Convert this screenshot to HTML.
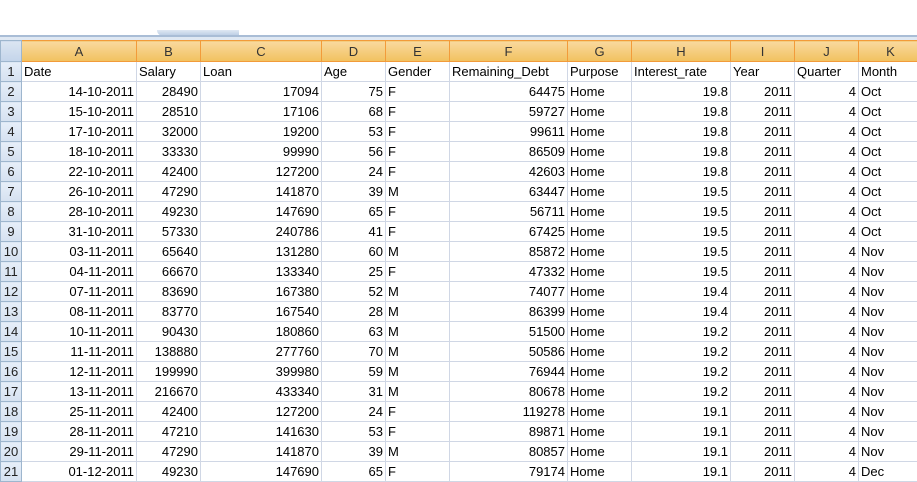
<!DOCTYPE html>
<html><head><style>
body{margin:0;width:917px;height:476px;overflow:hidden;background:#fff;font-family:"Liberation Sans",sans-serif;font-size:13px;color:#000;position:relative}
.bar{position:absolute;left:0;top:35px;width:917px;height:2px;background:#a9bdd6}
.bar2{position:absolute;left:0;top:37px;width:917px;height:3px;background:#dfe8f3}
.tab{position:absolute;left:157px;top:30px;width:82px;height:6px;background:linear-gradient(#dfe8f3,#b8cbe3);border-radius:0 0 0 8px}
table{position:absolute;left:0;top:40px;border-collapse:collapse;table-layout:fixed;width:922px}
td{height:19px;padding:0 2px;border:1px solid #d0d7e5;white-space:nowrap;overflow:hidden;line-height:19px}
tr.h td{background:linear-gradient(#f9d99f,#f1c15f);border-color:#f29b3a;text-align:center;color:#333;height:20px}
td.rh{background:linear-gradient(#e6eef9,#d5e1f0);border-color:#9eb6ce;text-align:center;color:#222;padding:0}
tr.h td.rh{background:linear-gradient(#dbe5f2,#c3d4ea);border-color:#9eb6ce}
.r{text-align:right}
</style></head><body>
<div class="tab"></div><div class="bar"></div><div class="bar2"></div>
<table>
<colgroup><col style="width:21px"><col style="width:115px"><col style="width:64px"><col style="width:121px"><col style="width:64px"><col style="width:64px"><col style="width:118px"><col style="width:64px"><col style="width:99px"><col style="width:64px"><col style="width:64px"><col style="width:64px"></colgroup>
<tr class="h"><td class="rh"></td><td>A</td><td>B</td><td>C</td><td>D</td><td>E</td><td>F</td><td>G</td><td>H</td><td>I</td><td>J</td><td>K</td></tr>
<tr><td class="rh">1</td><td>Date</td><td>Salary</td><td>Loan</td><td>Age</td><td>Gender</td><td>Remaining_Debt</td><td>Purpose</td><td>Interest_rate</td><td>Year</td><td>Quarter</td><td>Month</td></tr>
<tr><td class="rh">2</td><td class="r">14-10-2011</td><td class="r">28490</td><td class="r">17094</td><td class="r">75</td><td>F</td><td class="r">64475</td><td>Home</td><td class="r">19.8</td><td class="r">2011</td><td class="r">4</td><td>Oct</td></tr>
<tr><td class="rh">3</td><td class="r">15-10-2011</td><td class="r">28510</td><td class="r">17106</td><td class="r">68</td><td>F</td><td class="r">59727</td><td>Home</td><td class="r">19.8</td><td class="r">2011</td><td class="r">4</td><td>Oct</td></tr>
<tr><td class="rh">4</td><td class="r">17-10-2011</td><td class="r">32000</td><td class="r">19200</td><td class="r">53</td><td>F</td><td class="r">99611</td><td>Home</td><td class="r">19.8</td><td class="r">2011</td><td class="r">4</td><td>Oct</td></tr>
<tr><td class="rh">5</td><td class="r">18-10-2011</td><td class="r">33330</td><td class="r">99990</td><td class="r">56</td><td>F</td><td class="r">86509</td><td>Home</td><td class="r">19.8</td><td class="r">2011</td><td class="r">4</td><td>Oct</td></tr>
<tr><td class="rh">6</td><td class="r">22-10-2011</td><td class="r">42400</td><td class="r">127200</td><td class="r">24</td><td>F</td><td class="r">42603</td><td>Home</td><td class="r">19.8</td><td class="r">2011</td><td class="r">4</td><td>Oct</td></tr>
<tr><td class="rh">7</td><td class="r">26-10-2011</td><td class="r">47290</td><td class="r">141870</td><td class="r">39</td><td>M</td><td class="r">63447</td><td>Home</td><td class="r">19.5</td><td class="r">2011</td><td class="r">4</td><td>Oct</td></tr>
<tr><td class="rh">8</td><td class="r">28-10-2011</td><td class="r">49230</td><td class="r">147690</td><td class="r">65</td><td>F</td><td class="r">56711</td><td>Home</td><td class="r">19.5</td><td class="r">2011</td><td class="r">4</td><td>Oct</td></tr>
<tr><td class="rh">9</td><td class="r">31-10-2011</td><td class="r">57330</td><td class="r">240786</td><td class="r">41</td><td>F</td><td class="r">67425</td><td>Home</td><td class="r">19.5</td><td class="r">2011</td><td class="r">4</td><td>Oct</td></tr>
<tr><td class="rh">10</td><td class="r">03-11-2011</td><td class="r">65640</td><td class="r">131280</td><td class="r">60</td><td>M</td><td class="r">85872</td><td>Home</td><td class="r">19.5</td><td class="r">2011</td><td class="r">4</td><td>Nov</td></tr>
<tr><td class="rh">11</td><td class="r">04-11-2011</td><td class="r">66670</td><td class="r">133340</td><td class="r">25</td><td>F</td><td class="r">47332</td><td>Home</td><td class="r">19.5</td><td class="r">2011</td><td class="r">4</td><td>Nov</td></tr>
<tr><td class="rh">12</td><td class="r">07-11-2011</td><td class="r">83690</td><td class="r">167380</td><td class="r">52</td><td>M</td><td class="r">74077</td><td>Home</td><td class="r">19.4</td><td class="r">2011</td><td class="r">4</td><td>Nov</td></tr>
<tr><td class="rh">13</td><td class="r">08-11-2011</td><td class="r">83770</td><td class="r">167540</td><td class="r">28</td><td>M</td><td class="r">86399</td><td>Home</td><td class="r">19.4</td><td class="r">2011</td><td class="r">4</td><td>Nov</td></tr>
<tr><td class="rh">14</td><td class="r">10-11-2011</td><td class="r">90430</td><td class="r">180860</td><td class="r">63</td><td>M</td><td class="r">51500</td><td>Home</td><td class="r">19.2</td><td class="r">2011</td><td class="r">4</td><td>Nov</td></tr>
<tr><td class="rh">15</td><td class="r">11-11-2011</td><td class="r">138880</td><td class="r">277760</td><td class="r">70</td><td>M</td><td class="r">50586</td><td>Home</td><td class="r">19.2</td><td class="r">2011</td><td class="r">4</td><td>Nov</td></tr>
<tr><td class="rh">16</td><td class="r">12-11-2011</td><td class="r">199990</td><td class="r">399980</td><td class="r">59</td><td>M</td><td class="r">76944</td><td>Home</td><td class="r">19.2</td><td class="r">2011</td><td class="r">4</td><td>Nov</td></tr>
<tr><td class="rh">17</td><td class="r">13-11-2011</td><td class="r">216670</td><td class="r">433340</td><td class="r">31</td><td>M</td><td class="r">80678</td><td>Home</td><td class="r">19.2</td><td class="r">2011</td><td class="r">4</td><td>Nov</td></tr>
<tr><td class="rh">18</td><td class="r">25-11-2011</td><td class="r">42400</td><td class="r">127200</td><td class="r">24</td><td>F</td><td class="r">119278</td><td>Home</td><td class="r">19.1</td><td class="r">2011</td><td class="r">4</td><td>Nov</td></tr>
<tr><td class="rh">19</td><td class="r">28-11-2011</td><td class="r">47210</td><td class="r">141630</td><td class="r">53</td><td>F</td><td class="r">89871</td><td>Home</td><td class="r">19.1</td><td class="r">2011</td><td class="r">4</td><td>Nov</td></tr>
<tr><td class="rh">20</td><td class="r">29-11-2011</td><td class="r">47290</td><td class="r">141870</td><td class="r">39</td><td>M</td><td class="r">80857</td><td>Home</td><td class="r">19.1</td><td class="r">2011</td><td class="r">4</td><td>Nov</td></tr>
<tr><td class="rh">21</td><td class="r">01-12-2011</td><td class="r">49230</td><td class="r">147690</td><td class="r">65</td><td>F</td><td class="r">79174</td><td>Home</td><td class="r">19.1</td><td class="r">2011</td><td class="r">4</td><td>Dec</td></tr>
</table>
</body></html>
